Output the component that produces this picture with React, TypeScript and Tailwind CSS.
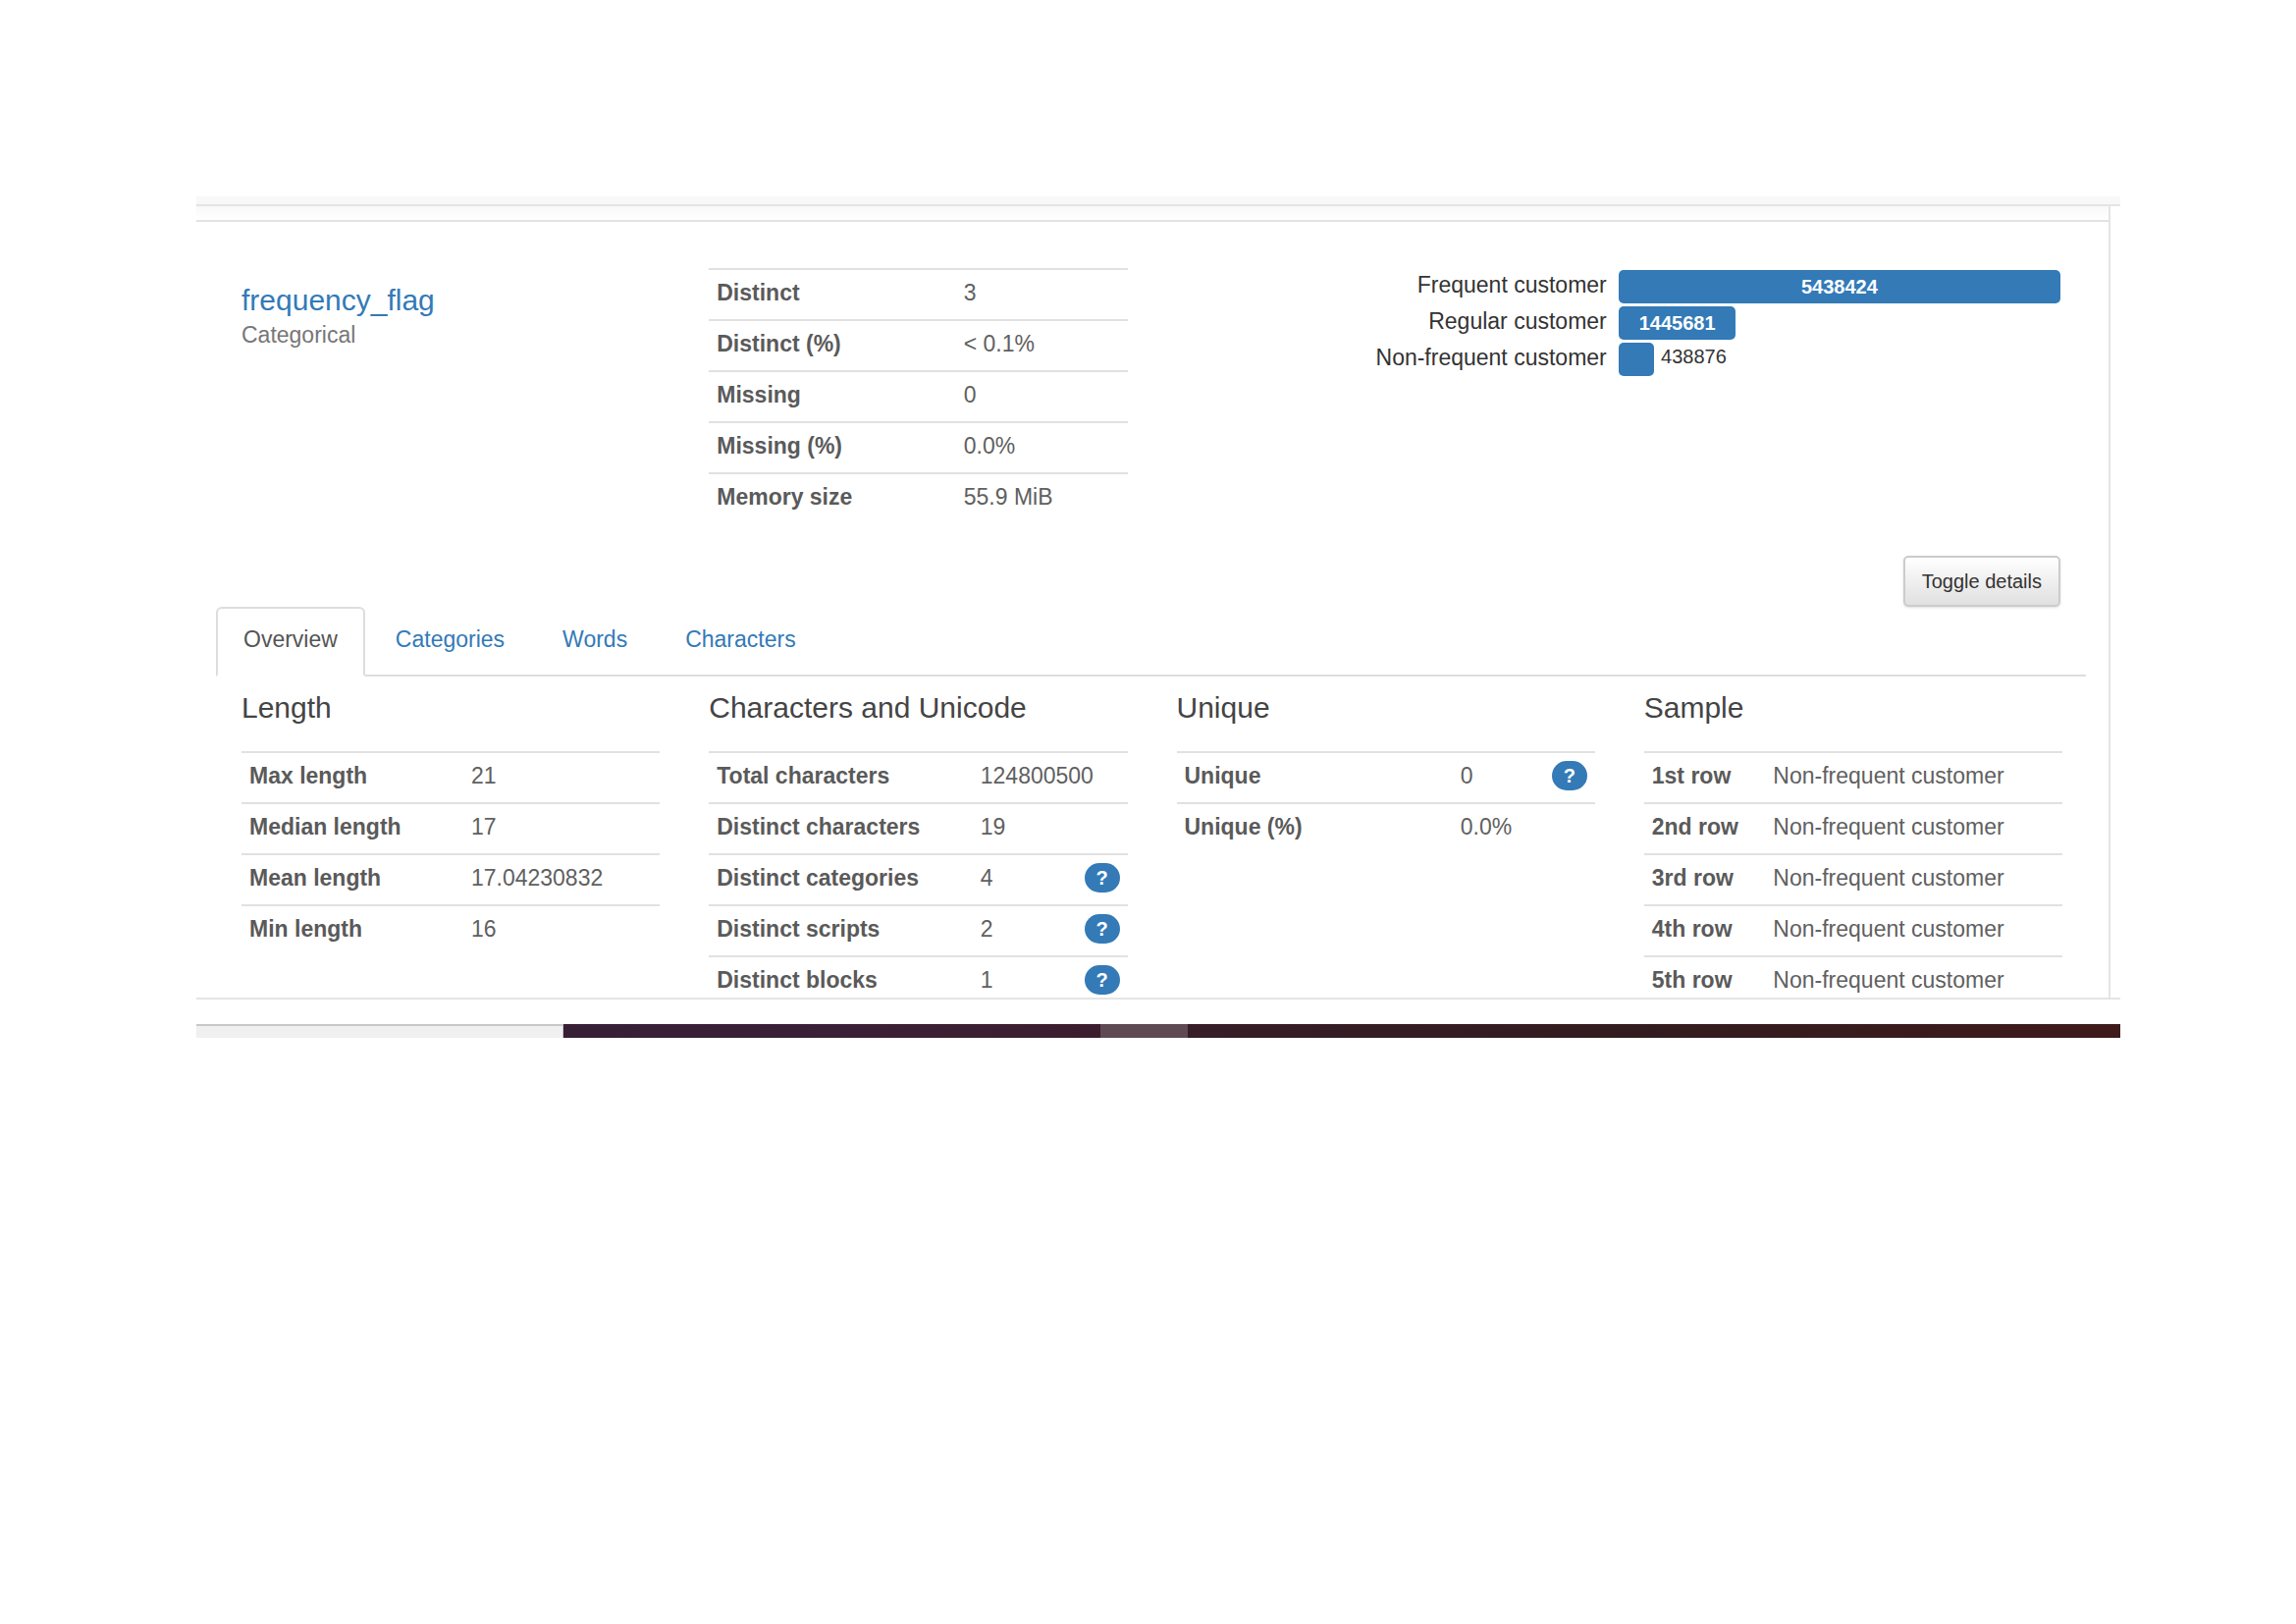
import type { ReactNode } from "react";

type Row = { label: string; value: string; help?: boolean };

const summary: Row[] = [
  { label: "Distinct", value: "3" },
  { label: "Distinct (%)", value: "< 0.1%" },
  { label: "Missing", value: "0" },
  { label: "Missing (%)", value: "0.0%" },
  { label: "Memory size", value: "55.9 MiB" },
];

const lengths: Row[] = [
  { label: "Max length", value: "21" },
  { label: "Median length", value: "17" },
  { label: "Mean length", value: "17.04230832" },
  { label: "Min length", value: "16" },
];

const characters: Row[] = [
  { label: "Total characters", value: "124800500" },
  { label: "Distinct characters", value: "19" },
  { label: "Distinct categories", value: "4", help: true },
  { label: "Distinct scripts", value: "2", help: true },
  { label: "Distinct blocks", value: "1", help: true },
];

const unique: Row[] = [
  { label: "Unique", value: "0", help: true },
  { label: "Unique (%)", value: "0.0%" },
];

const sample: Row[] = ["1st row", "2nd row", "3rd row", "4th row", "5th row"].map((label) => ({
  label,
  value: "Non-frequent customer",
}));

const frequencies = [
  { label: "Frequent customer", count: 5438424 },
  { label: "Regular customer", count: 1445681 },
  { label: "Non-frequent customer", count: 438876 },
];

const tabs = ["Overview", "Categories", "Words", "Characters"];

function StatTable({ rows, labelWidth, name }: { rows: Row[]; labelWidth: string; name: string }) {
  return (
    <table aria-label={name} className="w-full table-fixed border-collapse text-left text-[23px] leading-[30px] text-[#606060]">
      <colgroup>
        <col className={labelWidth} />
        <col />
      </colgroup>
      <tbody>
        {rows.map((row) => (
          <tr key={row.label} className="group">
            <th scope="row" className="whitespace-nowrap border-t-2 border-[#e1e1e1] px-2 pt-2 pb-3 font-bold text-[#5a5a5a] group-[:nth-child(5)]:pb-[3px]">
              {row.label}
            </th>
            <td className="border-t-2 border-[#e1e1e1] px-2 pt-2 pb-3 group-[:nth-child(5)]:pb-[3px]">
              <div className="flex items-center justify-between whitespace-nowrap">
                {row.value}
                {row.help && (
                  <button
                    type="button"
                    aria-label={`About ${row.label}`}
                    className="h-[30px] w-9 rounded-[15px] bg-[#337ab7] text-center text-[20px] leading-[30px] font-bold text-white"
                  >
                    ?
                  </button>
                )}
              </div>
            </td>
          </tr>
        ))}
      </tbody>
    </table>
  );
}

function Column({ title, children }: { title: string; children: ReactNode }) {
  return (
    <section className="pr-6 pl-[26px]">
      <h2 className="mb-[27px] text-[30px] leading-[34px] text-[#444]">{title}</h2>
      {children}
    </section>
  );
}

function FrequencyChart() {
  const max = frequencies[0].count;
  return (
    <div className="flex flex-col gap-[3px] pt-[2px]">
      {frequencies.map(({ label, count }) => {
        const inside = count / max > 0.2;
        return (
          <div key={label} className="flex h-[34px] gap-3 text-[#333]">
            <div className="flex-1 text-right text-[23px] leading-[30px]">{label}</div>
            <div className="flex w-1/2 gap-[7px] text-[20px]">
              <div
                className="h-full rounded-[5px] bg-[#337ab7] text-center leading-[35px] font-bold text-white"
                style={{ width: `${(count / max) * 100}%` }}
              >
                {inside && count}
              </div>
              {!inside && <span className="leading-[28px]">{count}</span>}
            </div>
          </div>
        );
      })}
    </div>
  );
}

export default function App() {
  return (
    <div className="min-h-screen bg-white pt-[200px] pr-[179px] pl-[200px] font-['Liberation_Sans',Arial,sans-serif]">
      <div className="h-2 bg-[#f8f8f8]" />
      <main className="border-y-2 border-[#e4e4e4] bg-white">
        <div className="mr-[10px] border-r-2 border-[#e4e4e4]">
          <div className="h-[14px] bg-linear-to-b from-[#f8f8f8] to-white" />
          <div className="border-t-2 border-[#e1e3e5] pr-[23px] pl-5">
            <div className="grid grid-cols-4 pt-[47px]">
              <div className="pr-6 pl-[26px] pt-4">
                <a href="#frequency_flag" className="block text-[30px] leading-[34px] text-[#337ab7]">
                  frequency_flag
                </a>
                <p className="text-[23px] leading-[36px] text-[#777]">Categorical</p>
              </div>
              <div className="pr-6 pl-[26px]">
                <StatTable name="Summary" rows={summary} labelWidth="w-[59%]" />
              </div>
              <div className="col-span-2 px-[26px]">
                <FrequencyChart />
              </div>
            </div>
            <div className="flex justify-end px-[26px] pt-[42px]">
              <button
                type="button"
                className="h-[52px] rounded-[5px] border-2 border-[#ccc] bg-linear-to-b from-white to-[#e0e0e0] px-[17px] text-[20px] leading-[28px] text-[#333] shadow-sm"
              >
                Toggle details
              </button>
            </div>
            <div role="tablist" className="flex gap-[3px] border-b-2 border-[#ddd]">
              {tabs.map((tab, i) => (
                <button
                  key={tab}
                  type="button"
                  role="tab"
                  aria-selected={i === 0}
                  className="-mb-[2px] rounded-t-md border-2 border-transparent px-[26px] pt-[14px] pb-[19px] text-[23px] leading-[34px] text-[#337ab7] aria-selected:border-[#ddd] aria-selected:border-b-white aria-selected:bg-white aria-selected:text-[#555]"
                >
                  {tab}
                </button>
              ))}
            </div>
            <div role="tabpanel" className="grid grid-cols-4 pt-[15px]">
              <Column title="Length">
                <StatTable name="Length" rows={lengths} labelWidth="w-[53%]" />
              </Column>
              <Column title="Characters and Unicode">
                <StatTable name="Characters and Unicode" rows={characters} labelWidth="w-[63%]" />
              </Column>
              <Column title="Unique">
                <StatTable name="Unique" rows={unique} labelWidth="w-[66%]" />
              </Column>
              <Column title="Sample">
                <StatTable name="Sample" rows={sample} labelWidth="w-[29%]" />
              </Column>
            </div>
          </div>
        </div>
      </main>
      <footer className="mt-[25px] flex h-[14px]">
        <div className="w-[374px] border-t-2 border-r border-[#c8c8c8] bg-[#f0f0f0]" />
        <div className="w-[547px] bg-linear-to-r from-[#371f35] via-[#3a2037] to-[#3c1d2e]" />
        <div className="w-[89px] bg-[#5f4953]" />
        <div className="flex-1 bg-linear-to-r from-[#361d27] via-[#331c1f] to-[#3f1a1b]" />
      </footer>
    </div>
  );
}
